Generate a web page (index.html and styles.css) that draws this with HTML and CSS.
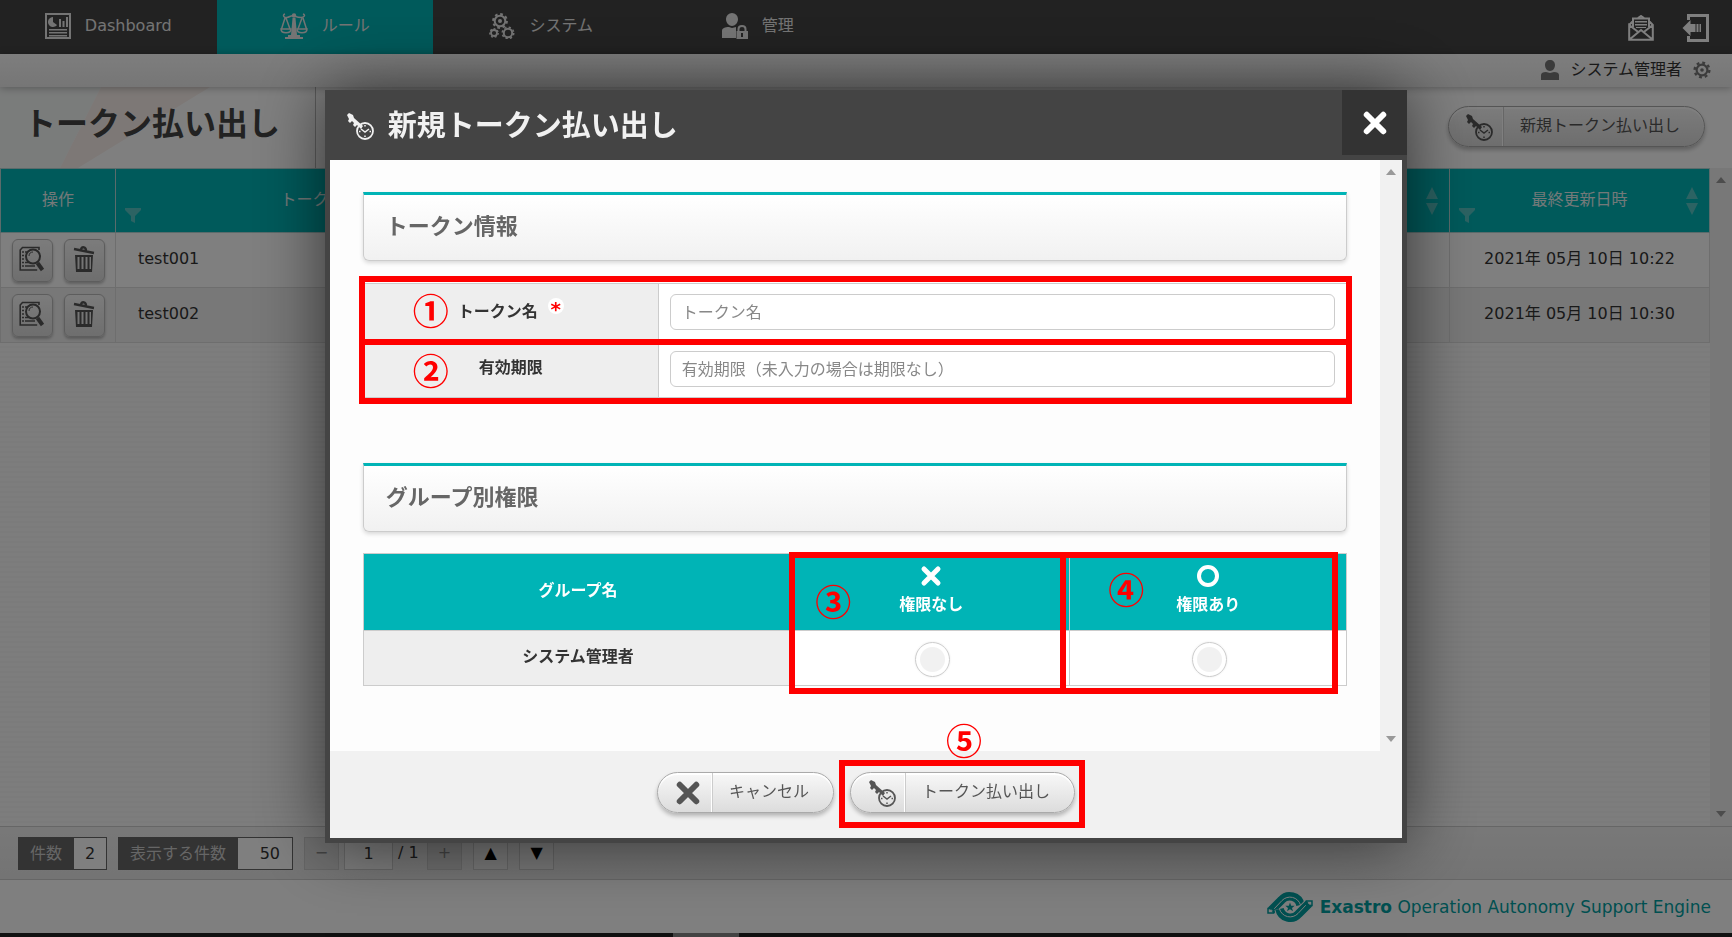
FILE: index.html
```html
<!DOCTYPE html>
<html lang="ja">
<head>
<meta charset="utf-8">
<title>トークン払い出し</title>
<link rel="stylesheet" href="styles.css">
</head>
<body>
<svg class="sprite" aria-hidden="true">
  <symbol id="i-key" viewBox="0 0 28 28">
    <path d="M1 3 3 1 7 3 8 6 17 14 15 17 11 13 9 15 7 13 8 11 6 9 4 11 2 9 3 7Z" fill="currentColor"/>
    <circle cx="19" cy="19" r="8" fill="none" stroke="currentColor" stroke-width="1.8"/>
    <path d="M15 17l4 3 4-3M19 13v1.500M19 23.500V25M13 19.500h1.500M23.500 19.500H25" fill="none" stroke="currentColor" stroke-width="1.500"/>
  </symbol>
  <symbol id="i-cross" viewBox="0 0 22 22">
    <path d="M4 4 18 18M18 4 4 18" fill="none" stroke="currentColor" stroke-width="5" stroke-linecap="round"/>
  </symbol>
  <symbol id="i-report" viewBox="0 0 26 26">
    <rect x="1" y="1" width="24" height="24" fill="none" stroke="currentColor" stroke-width="2"/>
    <path d="M8 4a5 5 0 1 0 4 8L8 9ZM14 6h2v8h-2zM17.500 8h2v6h-2zM21 4h2v10h-2zM4 16h18v1.500H4zM4 19h18v1.500H4zM4 22h18v1.500H4z" fill="currentColor"/>
  </symbol>
  <symbol id="i-scale" viewBox="0 0 28 28">
    <path d="M5 2C2 3 4 6 7 5.500S11 3 14 4s4 1.500 7 1.500S26 3 23 2M5 6 1.500 17M6 6l4 11M22 6l-4 11M23 6l3.500 11" fill="none" stroke="currentColor" stroke-width="1.500"/>
    <path d="M1 17h10c0 5-10 5-10 0zM17 17h10c0 5-10 5-10 0z" fill="none" stroke="currentColor" stroke-width="1.500"/>
    <circle cx="14" cy="3.500" r="2.200" fill="currentColor"/>
    <path d="M12.500 6h3l1.500 17h3v2h3v2H5v-2h3v-2h3z" fill="currentColor"/>
  </symbol>
  <symbol id="i-gear" viewBox="0 0 20 20">
    <circle cx="10" cy="10" r="6" fill="none" stroke="currentColor" stroke-width="2.400"/>
    <circle cx="10" cy="10" r="8.200" fill="none" stroke="currentColor" stroke-width="2.600" stroke-dasharray="3.220 3.220"/>
    <circle cx="10" cy="10" r="2" fill="currentColor"/>
  </symbol>
  <symbol id="i-gears" viewBox="0 0 26 26">
    <g fill="none" stroke="currentColor">
      <circle cx="11" cy="8" r="5.300" stroke-width="2"/><circle cx="11" cy="8" r="6.900" stroke-width="2" stroke-dasharray="2.710 2.710"/>
      <circle cx="5" cy="20" r="3" stroke-width="1.800"/><circle cx="5" cy="20" r="4.200" stroke-width="1.400" stroke-dasharray="1.890 1.890"/>
      <circle cx="19" cy="20" r="4.200" stroke-width="2"/><circle cx="19" cy="20" r="5.700" stroke-width="1.600" stroke-dasharray="2.240 2.240"/>
    </g>
    <circle cx="11" cy="8" r="2" fill="currentColor"/>
  </symbol>
  <symbol id="i-admin" viewBox="0 0 26 26">
    <path d="M10 0a6 6 0 0 1 6 6c0 4-3 7-6 7S4 10 4 6a6 6 0 0 1 6-6zM0 25v-7c0-3 3-4 7-4l3 1 4-1v11z" fill="currentColor"/>
    <path d="M15 18h11v8H14.500v-8zm4 2v4h2v-4z" fill="currentColor" fill-rule="evenodd"/>
    <path d="M16.500 18v-2c0-4 7-4 7 0v2" fill="none" stroke="currentColor" stroke-width="2"/>
  </symbol>
  <symbol id="i-mail" viewBox="0 0 26 26">
    <path d="M1.200 10 5 6M21 6l3.800 4v14.800H1.200V10l9 7M24.800 10l-9 7M1.500 24.500 13 15l11.500 9.500M5 12V3.500h16V12M10 3l3-2 3 2" fill="none" stroke="currentColor" stroke-width="2"/>
    <path d="M7 6h12v1.500H7zM7 9h12v1.500H7zM8 12h10v1H8z" fill="currentColor"/>
  </symbol>
  <symbol id="i-logout" viewBox="0 0 27 28">
    <path d="M6 6V1.500h19v25H6V22" fill="none" stroke="currentColor" stroke-width="3"/>
    <path d="M0 14 8 6v4h5v8H8v4zM14 10h2v8h-2zM17 10h1.500v8H17z" fill="currentColor"/>
  </symbol>
  <symbol id="i-user" viewBox="0 0 18 20">
    <path d="M9 0c3 0 5 2 5 5s-2 6-5 6-5-3-5-6 2-5 5-5zM0 20v-5c0-2 2-3 5-3l4 1 4-1c3 0 5 1 5 3v5z" fill="currentColor"/>
  </symbol>
  <symbol id="i-detail" viewBox="0 0 26 26">
    <path d="M20 4V1.500H3.500L1.200 4v20h17" fill="none" stroke="currentColor" stroke-width="1.600"/>
    <path d="M3 6h2M3 9.500h2M3 13h2M3 16.500h2M3 20h2M6 6h2M6 16.500h4M6 20h10" stroke="currentColor" stroke-width="1.500"/>
    <circle cx="14" cy="10.500" r="7" fill="none" stroke="currentColor" stroke-width="2"/>
    <path d="M10 10c0-3 2-4 4-4" fill="none" stroke="currentColor"/>
    <path d="m18.500 17 5 7" stroke="currentColor" stroke-width="4"/>
  </symbol>
  <symbol id="i-trash" viewBox="0 0 22 26">
    <path d="m1 3 20 4M8 3.500C9 0 13 1 13 4.500" fill="none" stroke="currentColor" stroke-width="2.400"/>
    <path d="M2 9h18l-1 17H3zm2.500 2v12h2V11zm4 0v12h2V11zm4 0v12h2V11zm4 0v12h1.500V11z" fill="currentColor" fill-rule="evenodd"/>
  </symbol>
  <symbol id="i-filter" viewBox="0 0 16 15"><path d="M0 0h16v2l-6 6v7l-4-2V8L0 2z" fill="currentColor"/></symbol>
  <symbol id="i-sort" viewBox="0 0 12 28"><path d="m6 0 6 12H0zM0 16h12L6 28z" fill="currentColor"/></symbol>
  <symbol id="i-up" viewBox="0 0 10 6"><path d="m5 0 5 6H0z" fill="currentColor"/></symbol>
  <symbol id="i-down" viewBox="0 0 10 6"><path d="M0 0h10L5 6z" fill="currentColor"/></symbol>
  <symbol id="i-logo" viewBox="0 0 46 32">
    <g fill="none">
      <path d="M4 19.500 14.500 9A11 11 0 0 1 33.500 14" stroke="currentColor" stroke-width="8.500"/>
      <path d="M7 18 15 9.500A11 11 0 0 1 33.500 14" stroke="#fff"/>
      <path d="M42 12.500 31.500 23A11 11 0 0 1 12.500 18" stroke="#fff" stroke-width="10.500"/>
      <path d="M42 12.500 31.500 23A11 11 0 0 1 12.500 18" stroke="currentColor" stroke-width="8.500"/>
      <path d="M39 14 31 22.500A11 11 0 0 1 12.500 18" stroke="#fff"/>
      <path d="M1 17.500h5.500V22H1zM39.500 10H45v4.500h-5.500z" stroke="currentColor" stroke-width="1.500"/>
      <path d="M2.500 19.800h3M4 18.500V21M41 12.200h3M42.500 11v2.500" stroke="#fff"/>
    </g>
    <path d="m23 11.500 1.200 3.300h3.500L25 16.900l1 3.400-3-2-3 2 1-3.400-2.700-2.100h3.500z" fill="currentColor"/>
  </symbol>
</svg>

<div class="page">
  <header class="top">
    <nav class="nav">
      <a class="nav-item" href="#"><svg class="ic-26"><use href="#i-report"/></svg>Dashboard</a>
      <a class="nav-item active" href="#"><svg class="ic-28"><use href="#i-scale"/></svg>ルール</a>
      <a class="nav-item" href="#"><svg class="ic-26"><use href="#i-gears"/></svg>システム</a>
      <a class="nav-item" href="#"><svg class="ic-26"><use href="#i-admin"/></svg>管理</a>
    </nav>
    <div class="top-actions">
      <button class="plain" type="button" aria-label="メール"><svg class="ic-26"><use href="#i-mail"/></svg></button>
      <button class="plain" type="button" aria-label="ログアウト"><svg class="ic-28"><use href="#i-logout"/></svg></button>
    </div>
  </header>
  <div class="userbar">
    <svg class="ic-20"><use href="#i-user"/></svg>
    <span class="user-name">システム管理者</span>
    <svg class="ic-18"><use href="#i-gear"/></svg>
  </div>
  <div class="titlebar">
    <h1 class="page-title">トークン払い出し</h1>
    <button class="pill pill-page" type="button"><span class="pill-icon"><svg class="ic-28"><use href="#i-key"/></svg></span><span class="pill-text">新規トークン払い出し</span></button>
  </div>
  <main class="list">
    <div class="list-body">
      <table class="grid">
        <colgroup><col class="c-op"><col class="c-name"><col><col class="c-date"></colgroup>
        <thead>
          <tr>
            <th>操作</th>
            <th>トークン名<svg class="filter"><use href="#i-filter"/></svg></th>
            <th><svg class="sort"><use href="#i-sort"/></svg></th>
            <th>最終更新日時<svg class="filter"><use href="#i-filter"/></svg><svg class="sort"><use href="#i-sort"/></svg></th>
          </tr>
        </thead>
        <tbody>
          <tr>
            <td><div class="ops"><button class="op" type="button" aria-label="詳細"><svg class="ic-26"><use href="#i-detail"/></svg></button><button class="op" type="button" aria-label="削除"><svg class="ic-26"><use href="#i-trash"/></svg></button></div></td>
            <td class="name">test001</td><td></td><td class="date">2021年 05月 10日 10:22</td>
          </tr>
          <tr>
            <td><div class="ops"><button class="op" type="button" aria-label="詳細"><svg class="ic-26"><use href="#i-detail"/></svg></button><button class="op" type="button" aria-label="削除"><svg class="ic-26"><use href="#i-trash"/></svg></button></div></td>
            <td class="name">test002</td><td></td><td class="date">2021年 05月 10日 10:30</td>
          </tr>
        </tbody>
      </table>
    </div>
    <div class="gutter"><svg class="arrow"><use href="#i-up"/></svg><svg class="arrow"><use href="#i-down"/></svg></div>
  </main>
  <div class="pager">
    <div class="count"><span class="count-label">件数</span><span class="count-value">2</span></div>
    <div class="count"><label class="count-label" for="per">表示する件数</label><input class="per" id="per" value="50"></div>
    <div class="pages">
      <button class="step off" type="button">−</button>
      <input class="page-no" aria-label="ページ" value="1">
      <span class="total">/ 1</span>
      <button class="step off" type="button">+</button>
    </div>
    <button class="step" type="button">▲</button>
    <button class="step" type="button">▼</button>
  </div>
  <footer class="foot"><svg class="logo"><use href="#i-logo"/></svg><span><b>Exastro</b> Operation Autonomy Support Engine</span></footer>
</div>
<div class="taskbar"><span class="task"></span></div>

<div class="overlay">
  <section class="modal" role="dialog" aria-labelledby="dlg">
    <header class="modal-head">
      <svg class="ic-28"><use href="#i-key"/></svg>
      <h2 class="modal-title" id="dlg">新規トークン払い出し</h2>
      <button class="close" type="button" aria-label="閉じる"><svg class="ic-26"><use href="#i-cross"/></svg></button>
    </header>
    <div class="modal-main">
      <div class="modal-scroll">
        <h3 class="section">トークン情報</h3>
        <div class="marked">
          <table class="form">
            <colgroup><col class="c-label"><col></colgroup>
            <tr><th><label for="tname">トークン名<span class="req">*</span></label></th><td><input class="field" id="tname" placeholder="トークン名"></td></tr>
            <tr><th><label for="limit">有効期限</label></th><td><input class="field" id="limit" placeholder="有効期限（未入力の場合は期限なし）"></td></tr>
          </table>
          <div class="frame frame-1"><span class="num">①</span></div>
          <div class="frame frame-2"><span class="num">②</span></div>
        </div>
        <h3 class="section section-next">グループ別権限</h3>
        <div class="marked">
          <table class="perm">
            <colgroup><col><col class="c-perm"><col class="c-perm"></colgroup>
            <thead><tr>
              <th>グループ名</th>
              <th><svg class="ic-22"><use href="#i-cross"/></svg><span class="perm-name" id="p0">権限なし</span></th>
              <th><span class="ring"></span><span class="perm-name" id="p1">権限あり</span></th>
            </tr></thead>
            <tbody><tr>
              <th>システム管理者</th>
              <td><input class="radio" type="radio" name="perm" aria-labelledby="p0"></td>
              <td><input class="radio" type="radio" name="perm" aria-labelledby="p1"></td>
            </tr></tbody>
          </table>
          <div class="frame frame-3"><span class="num">③</span></div>
          <div class="frame frame-4"><span class="num">④</span></div>
        </div>
      </div>
      <div class="gutter gutter-modal"><svg class="arrow"><use href="#i-up"/></svg><svg class="arrow"><use href="#i-down"/></svg></div>
    </div>
    <footer class="modal-foot">
      <button class="pill" type="button"><span class="pill-icon"><svg class="ic-26"><use href="#i-cross"/></svg></span><span class="pill-text">キャンセル</span></button>
      <div class="marked">
        <button class="pill" type="button"><span class="pill-icon"><svg class="ic-28"><use href="#i-key"/></svg></span><span class="pill-text">トークン払い出し</span></button>
        <div class="frame frame-5"><span class="num">⑤</span></div>
      </div>
    </footer>
  </section>
</div>
</body>
</html>
```
FILE: styles.css
```css
* { box-sizing: border-box; }
body {
  margin: 0;
  height: 100vh;
  display: flex;
  flex-direction: column;
  overflow: hidden;
  font: 16px/24px "DejaVu Sans", "Noto Sans CJK JP", sans-serif;
  color: #333;
}
button, input { font: inherit; color: inherit; margin: 0; }
h1, h2, h3 { margin: 0; }
svg { display: block; flex: none; }
.sprite { position: absolute; width: 0; height: 0; }
.ic-18 { width: 18px; height: 18px; }
.ic-20 { width: 18px; height: 20px; }
.ic-22 { width: 22px; height: 22px; }
.ic-26 { width: 26px; height: 26px; }
.ic-28 { width: 28px; height: 28px; }

.page { flex: 1; min-height: 0; display: flex; flex-direction: column; background: #fff; }
.top { height: 54px; display: flex; justify-content: space-between; background: #444; color: #fff; }
.nav { flex: 1; display: flex; }
.nav-item {
  width: 12.5vw;
  display: flex;
  align-items: center;
  justify-content: center;
  gap: 14px;
  padding-bottom: 3px;
  color: #e8e8e8;
  text-decoration: none;
}
.nav-item.active { background: #00b4b6; }
.top-actions { display: flex; align-items: center; gap: 28px; padding: 2px 22px 0 0; }
.plain { padding: 0; border: 0; background: none; }
.userbar {
  height: 33px;
  display: flex;
  align-items: center;
  justify-content: flex-end;
  gap: 11px;
  padding: 0 21px 2px 0;
  background: linear-gradient(#fcfcfc, #ececec);
  box-shadow: 0 1px 8px rgba(0, 0, 0, .3);
  z-index: 1;
}
.userbar svg { color: #777; }
.titlebar {
  height: 81px;
  display: flex;
  align-items: stretch;
  justify-content: space-between;
  padding-right: 27px;
  background: #fff;
}
.page-title {
  position: relative;
  z-index: 0;
  width: 316px;
  padding: 5px 0 0 24px;
  border-right: 1px solid #bbb;
  font-size: 32px;
  line-height: 64px;
  white-space: nowrap;
  color: #444;
}
.page-title::before, .page-title::after { content: ""; position: absolute; inset: 0; z-index: -1; }
.page-title::before { background: #f5f8f7; clip-path: polygon(0 0, 101px 0, 60px 100%, 0 100%); }
.page-title::after { background: #faf1ed; clip-path: polygon(101px 0, 210px 0, 78px 100%, 60px 100%); }

.pill {
  height: 41px;
  display: flex;
  align-items: stretch;
  padding: 0;
  border: 1px solid #aaa;
  border-radius: 21px;
  background: linear-gradient(#f8f8f8, #dcdcdc);
  box-shadow: 0 3px 4px rgba(0, 0, 0, .25), inset 0 2px 1px #fff;
  color: #555;
  white-space: nowrap;
}
.pill-page { margin-top: 19px; }
.pill-icon { width: 54px; padding-left: 8px; display: flex; align-items: center; justify-content: center; border-right: 1px solid #fff; box-shadow: 1px 0 #ccc; }
.pill-text { padding: 7px 24px 0 17px; }

.list { flex: 1; min-height: 0; display: flex; }
.list-body { flex: 1; background: repeating-linear-gradient(#fbfbfb 0 3px, #f7f7f7 3px 5px); }
.gutter { width: 22px; display: flex; flex-direction: column; align-items: center; justify-content: space-between; padding: 9px 0; background: #f1f1f1; }
.arrow { width: 10px; height: 6px; color: #999; }
.grid { width: 100%; table-layout: fixed; border-collapse: collapse; }
.c-op { width: 115px; }
.c-name { width: 410px; }
.c-date { width: 260px; }
.grid th { position: relative; height: 64px; padding: 0 0 2px; border: 1px solid #b4d6d6; background: #00b4b6; color: #e6f3f3; font-weight: 400; }
.grid td { height: 55px; padding: 0 0 3px; border: 1px solid #ddd; background: #fff; }
.grid td:first-child { padding-bottom: 0; }
.grid tr:nth-child(2) td { background: #f1f1f1; }
.filter { position: absolute; left: 9px; bottom: 9px; width: 16px; height: 15px; color: #59c6c6; }
.sort { position: absolute; right: 11px; top: 18px; width: 12px; height: 28px; color: #59c6c6; }
.ops { display: flex; justify-content: center; gap: 11px; }
.op { width: 41px; height: 43px; display: flex; align-items: center; justify-content: center; padding: 0 0 2px; border: 1px solid #bbb; border-radius: 6px; background: linear-gradient(#f8f8f8, #ddd); box-shadow: 0 2px 3px rgba(0, 0, 0, .25); color: #555; }
.grid .name { padding-left: 22px; }
.grid .date { text-align: center; }

.pager { height: 54px; display: flex; align-items: center; gap: 11px; padding: 0 18px; border: 1px solid #ccc; border-width: 1px 0; background: linear-gradient(#f1f1f1, #e8e8e8); }
.count { display: flex; height: 33px; border: 1px solid #666; background: #fff; line-height: 31px; }
.count-label { padding: 0 12px 0 11px; background: #666; color: #ccc; }
.count-value { width: 32px; text-align: center; }
.per { width: 54px; padding: 0 12px 0 0; border: 0; background: #fff; text-align: right; }
.pages { display: flex; align-items: center; gap: 5px; }
.total { width: 24px; white-space: nowrap; }
.step { width: 35px; height: 33px; padding: 0; border: 1px solid #ccc; background: #f1f1f1; color: #000; }
.step.off { background: #ddd; color: #888; }
.page-no { width: 49px; height: 33px; border: 1px solid #ccc; background: #f8f8f8; text-align: center; }
.foot { height: 53px; display: flex; align-items: center; justify-content: flex-end; gap: 7px; padding-right: 21px; background: #fff; color: #00a0a2; font-size: 17px; }
.logo { width: 46px; height: 32px; }
.taskbar { height: 4px; background: #111; }
.task { display: block; width: 66px; height: 4px; margin-left: 673px; background: #444; }

.overlay { position: fixed; inset: 0 0 4px; z-index: 2; display: flex; align-items: center; justify-content: center; background: rgba(0, 0, 0, .5); }
.modal { width: 62.5%; padding: 0 5px 5px; background: #444; box-shadow: 0 0 64px rgba(0, 0, 0, .6); }
.modal-head { height: 70px; display: flex; align-items: center; gap: 14px; margin-right: -5px; padding: 2px 0 0 16px; color: #f1f1f1; }
.modal-title { flex: 1; font-size: 29px; line-height: 40px; }
.close { align-self: flex-start; width: 65px; height: 65px; margin-top: -2px; display: flex; align-items: center; justify-content: center; padding: 0; border: 0; background: #333; color: #fff; }
.modal-main { display: flex; background: #fdfdfd; }
.modal-scroll { flex: 1; padding: 32px 33px 65px; }
.section { height: 69px; padding-left: 22px; border: 1px solid #ccc; border-top: 3px solid #00b4b6; border-radius: 0 0 6px 6px; background: linear-gradient(#fff, #f1f1f1); box-shadow: 0 2px 4px rgba(0, 0, 0, .15); font-size: 22px; line-height: 64px; color: #666; }
.section-next { margin-top: 65px; }
.marked { position: relative; }
.section + .marked { margin-top: 22px; }
.section-next + .marked { margin-top: 21px; }
.form, .perm { width: 100%; table-layout: fixed; border-collapse: collapse; background: #fff; }
.form th, .form td, .perm th, .perm td { border: 1px solid #ccc; }
.c-label { width: 295px; }
.form th { height: 57px; padding: 0 0 2px; background: #eee; }
.form td { padding: 0 11px; }
.req { display: inline-block; width: 16px; height: 16px; margin-left: 10px; border-radius: 8px; background: #fff; color: #f00; font-size: 20px; line-height: 22px; vertical-align: 1px; }
.field { display: block; width: 100%; height: 36px; padding: 0 11px; border: 1px solid #ccc; border-radius: 6px; background: #fff; }
.field::placeholder { color: #888; opacity: 1; }
.c-perm { width: 277px; }
.perm thead th { height: 77px; padding: 0 0 2px; background: #00b4b6; color: #fff; }
.perm thead svg { margin: 0 auto 6px; }
.perm-name { display: block; }
.ring { display: block; width: 22px; height: 22px; margin: 0 auto 6px; border: 4px solid #fff; border-radius: 50%; }
.perm tbody th { height: 55px; padding: 0 0 3px; background: #eee; }
.perm td { padding: 2px 0 0 3px; }
.radio { appearance: none; display: block; width: 35px; height: 35px; margin: 0 auto; border: 1px solid #ccc; border-radius: 50%; background: radial-gradient(#f1f1f1 12px, #fff 13px); box-shadow: 0 0 2px rgba(0, 0, 0, .1); }
.gutter-modal { width: 22px; }
.modal-foot { display: flex; justify-content: center; gap: 16px; padding: 21px 0 25px; background: #f1f1f1; }

.frame { position: absolute; border: 6px solid #f00; pointer-events: none; }
.num { position: absolute; font: bold 36px/36px "Noto Sans CJK JP", sans-serif; color: #f00; }
.frame-1 { left: -4px; right: -5px; top: -7px; height: 69px; }
.frame-2 { left: -4px; right: -5px; top: 56px; bottom: -6px; }
.frame-3 { right: 281px; width: 277px; top: -1px; bottom: -8px; }
.frame-4 { right: 9px; width: 278px; top: -1px; bottom: -8px; }
.frame-5 { inset: -12px -10px -15px -11px; }
.frame-1 .num { left: 48px; top: 9px; }
.frame-2 .num { left: 48px; top: 6px; }
.frame-3 .num { left: 20px; top: 24px; }
.frame-4 .num { left: 42px; top: 12px; }
.frame-5 .num { left: 101px; top: -45px; }
```
